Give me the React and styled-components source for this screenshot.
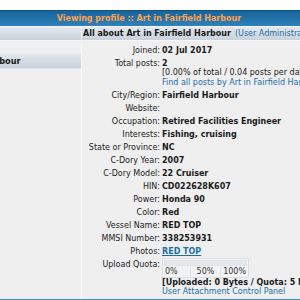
import { Fragment } from 'react';
import styled, { createGlobalStyle } from 'styled-components';

const Global = createGlobalStyle`
  html, body {
    margin: 0;
    padding: 0;
    background: #ffffff;
    overflow: hidden;
  }
  body {
    font-family: "DejaVu Sans", Verdana, sans-serif;
    font-size: 8px;
    color: #1a1a1a;
  }
`;

const Page = styled.div`
  width: 300px;
  height: 300px;
  overflow: hidden;
  padding-top: 10px;
  box-sizing: border-box;
`;

const Forum = styled.div`
  width: 592px;
  margin-left: -147px;
  background: #efefef;
  border-bottom: 3px solid #3a8ec4;
`;

const TitleBar = styled.div`
  height: 16px;
  background: linear-gradient(#17649a, #2f82bc);
  border-top: 1px solid #0f5584;
  box-sizing: border-box;
  display: flex;
  align-items: center;
  justify-content: center;
  color: #ffa048;
  font-weight: bold;
`;

const HeadRow = styled.div`
  display: grid;
  grid-template-columns: 229px 1fr;
  border-top: 1px solid #f4f6f8;
  border-bottom: 1px solid #f6f6f6;
`;

const HeadCell = styled.div`
  height: 13px;
  background: linear-gradient(#e3e8ee, #c9d2dc);
  border-right: ${p => (p.$first ? '1px solid #f8f8f8' : 'none')};
  display: flex;
  align-items: center;
  padding-left: 1px;
  font-weight: bold;
  white-space: nowrap;
`;

const Admin = styled.a`
  font-weight: normal;
  color: #1b6ea8;
  text-decoration: none;
  margin-left: 4px;
`;

const Body = styled.div`
  display: grid;
  grid-template-columns: 229px 1fr;
  padding-top: 3px;
`;

const Side = styled.div`
  border-right: 1px solid #fafafa;
  padding-top: 10px;
`;

const NameBar = styled.div`
  height: 14px;
  background: linear-gradient(#e1e6ec, #c7cfd9);
  border-bottom: 1px solid #e2e6ea;
  display: flex;
  align-items: center;
  justify-content: center;
  font-weight: bold;
  font-size: 8.2px;
`;

const Details = styled.div`
  display: grid;
  grid-template-columns: 78px 1fr;
  column-gap: 2px;
  align-content: start;
`;

const Label = styled.div`
  text-align: right;
  line-height: 9.5px;
  padding: 1.75px 0;
  white-space: nowrap;
  color: #222;
`;

const Value = styled.div`
  line-height: 9.5px;
  padding: 1.75px 0;
  white-space: nowrap;
  font-weight: ${p => (p.$bold ? 'bold' : 'normal')};
`;

const Line = styled.div`
  font-weight: ${p => (p.$bold ? 'bold' : 'normal')};
`;

const Link = styled.a`
  color: #1b6ea8;
  text-decoration: ${p => (p.$underline ? 'underline' : 'none')};
  font-weight: ${p => (p.$bold ? 'bold' : 'normal')};
`;

const Quota = styled.div`
  width: 87px;
  border: 1px solid #d9dee3;
  box-sizing: border-box;
  background: #f2f2f2;
  margin-top: -2px;
`;

const QuotaBar = styled.div`
  height: 6px;
  margin: 1px;
  background: #e6e9ec;
  border: 1px solid #dfe3e7;
  box-sizing: border-box;
`;

const QuotaScale = styled.div`
  display: grid;
  grid-template-columns: 28px 30px 1fr;
  height: 10px;
  line-height: 10px;
  color: #333;
`;

const Tick = styled.div`
  text-align: ${p => p.$align || 'left'};
  padding: 0 2px;
  border-right: ${p => (p.$last ? 'none' : '1px solid #e4e4e4')};
`;

const rows = [
  ['Joined:', <Value $bold>02 Jul 2017</Value>],
  [
    'Total posts:',
    <Value>
      <Line $bold>2</Line>
      <Line>[0.00% of total / 0.04 posts per day]</Line>
      <Link href="#">Find all posts by Art in Fairfield Harbour</Link>
    </Value>,
  ],
  ['City/Region:', <Value $bold>Fairfield Harbour</Value>],
  ['Website:', <Value>&nbsp;</Value>],
  ['Occupation:', <Value $bold>Retired Facilities Engineer</Value>],
  ['Interests:', <Value $bold>Fishing, cruising</Value>],
  ['State or Province:', <Value $bold>NC</Value>],
  ['C-Dory Year:', <Value $bold>2007</Value>],
  ['C-Dory Model:', <Value $bold>22 Cruiser</Value>],
  ['HIN:', <Value $bold>CD022628K607</Value>],
  ['Power:', <Value $bold>Honda 90</Value>],
  ['Color:', <Value $bold>Red</Value>],
  ['Vessel Name:', <Value $bold>RED TOP</Value>],
  ['MMSI Number:', <Value $bold>338253931</Value>],
  [
    'Photos:',
    <Value>
      <Link href="#" $bold $underline>RED TOP</Link>
    </Value>,
  ],
  [
    'Upload Quota:',
    <Value>
      <Quota>
        <QuotaBar />
        <QuotaScale>
          <Tick>0%</Tick>
          <Tick $align="center">50%</Tick>
          <Tick $align="right" $last>100%</Tick>
        </QuotaScale>
      </Quota>
      <Line $bold>[Uploaded: 0 Bytes / Quota: 5 MB]</Line>
      <Link href="#">User Attachment Control Panel</Link>
    </Value>,
  ],
];

export default function App() {
  return (
    <Page>
      <Global />
      <Forum>
        <TitleBar>Viewing profile :: Art in Fairfield Harbour</TitleBar>
        <HeadRow>
          <HeadCell $first>&nbsp;</HeadCell>
          <HeadCell>
            All about Art in Fairfield Harbour
            <Admin href="#">(User Administration)</Admin>
          </HeadCell>
        </HeadRow>
        <Body>
          <Side>
            <NameBar>Art in Fairfield Harbour</NameBar>
          </Side>
          <Details>
            {rows.map(([label, value]) => (
              <Fragment key={label}>
                <Label>{label}</Label>
                {value}
              </Fragment>
            ))}
          </Details>
        </Body>
      </Forum>
    </Page>
  );
}
